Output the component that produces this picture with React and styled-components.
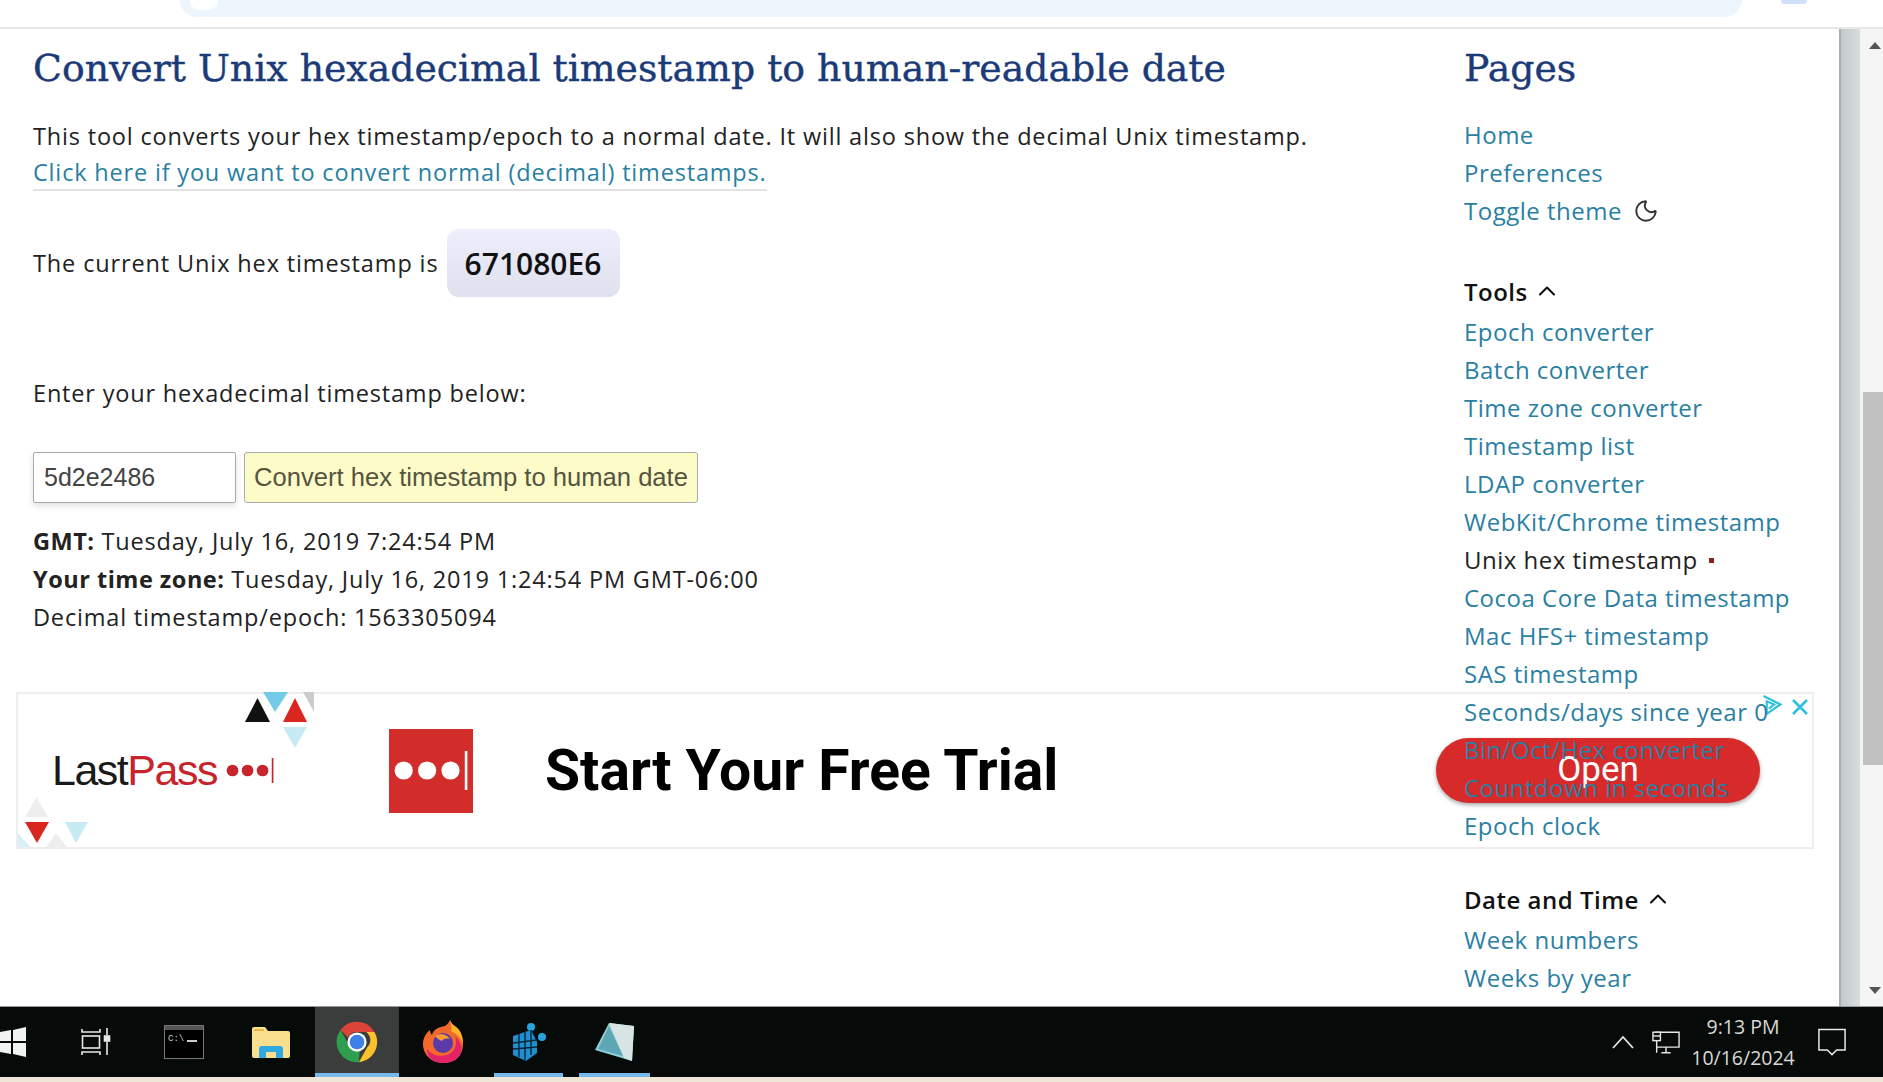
import React from 'react';
import styled, { createGlobalStyle } from 'styled-components';
import { Moon, ChevronUp } from 'lucide-react';

const GlobalStyle = createGlobalStyle`
  html, body {
    margin: 0;
    padding: 0;
    height: 100%;
    overflow: hidden;
    background: #fff;
  }
  * { box-sizing: border-box; }
`;

const Page = styled.div`
  width: 1883px;
  height: 1082px;
  display: flex;
  flex-direction: column;
  font-family: "Open Sans", "Noto Sans", sans-serif;
  color: #222;
  overflow: hidden;
`;

const BrowserBar = styled.div`
  height: 29px;
  flex: none;
  display: flex;
  justify-content: space-between;
  padding-left: 180px;
  padding-right: 76px;
  border-bottom: 2px solid #e8e8e8;
`;

const UrlPill = styled.div`
  width: 1562px;
  height: 17px;
  background: #eef6fd;
  border-radius: 0 0 22px 22px;
  padding-left: 10px;
`;

const UrlCircle = styled.div`
  width: 28px;
  height: 10px;
  background: #fff;
  border-radius: 0 0 14px 14px;
`;

const ProfileDot = styled.div`
  width: 26px;
  height: 4px;
  background: #cfe0fb;
  border-radius: 0 0 13px 13px;
`;

const Main = styled.div`
  position: relative;
  flex: 1;
  min-height: 0;
  display: flex;
  overflow: hidden;
`;

const Content = styled.main`
  width: 1432px;
  flex: none;
  padding: 17px 0 0 33px;
`;

const Title = styled.h1`
  margin: 0;
  font-family: "DejaVu Serif", "Liberation Serif", serif;
  font-weight: 400;
  font-size: 37.8px;
  line-height: 44px;
  color: #1b3b78;
  -webkit-text-stroke: 0.4px #1b3b78;
  white-space: nowrap;
`;

const Paragraph = styled.p`
  margin: ${p => p.$top || 0}px 0 0;
  font-size: 23.5px;
  letter-spacing: 0.82px;
  line-height: 36px;
  white-space: nowrap;
`;

const InfoLink = styled.a`
  color: #2a7fa3;
  display: inline-block;
  line-height: 33px;
  border-bottom: 2px solid #e3e3e3;
`;

const CurrentRow = styled.div`
  margin-top: 38px;
  display: flex;
  align-items: center;
  gap: 8px;
  font-size: 23.5px;
  letter-spacing: 0.87px;
  white-space: nowrap;
`;

const HexBadge = styled.span`
  width: 173px;
  height: 68px;
  display: flex;
  align-items: center;
  justify-content: center;
  border-radius: 12px;
  background: linear-gradient(#eeeefc, #dfe1ef);
  font-weight: 600;
  font-size: 30px;
  letter-spacing: 0;
  color: #111;
`;

const ConvertForm = styled.form`
  margin: 41px 0 0;
  display: flex;
  gap: 8px;
  height: 51px;
`;

const HexInput = styled.input`
  width: 203px;
  border: 1px solid #aaa;
  border-radius: 2px;
  padding: 0 10px;
  font-family: "Liberation Sans", Arial, sans-serif;
  font-size: 25px;
  color: #444;
  box-shadow: 0 3px 6px rgba(0, 0, 0, 0.12);
  outline: none;
`;

const ConvertButton = styled.button`
  width: 454px;
  border: 1px solid #aaa;
  border-radius: 3px;
  padding: 0;
  background: #fdfbc8;
  font-family: "Liberation Sans", Arial, sans-serif;
  font-size: 25.6px;
  color: #55553f;
`;

const Results = styled.div`
  margin-top: 19px;
  font-size: 23.5px;
  letter-spacing: 0.82px;
  line-height: 38px;
  white-space: nowrap;
`;

const ResultLabel = styled.b`
  letter-spacing: 0.5px;
`;

const Sidebar = styled.aside`
  position: relative;
  z-index: 2;
  width: 407px;
  flex: none;
  padding: 17px 0 0 32px;
  font-size: 24px;
  letter-spacing: 0.5px;
  white-space: nowrap;
`;

const SideTitle = styled.h2`
  margin: 0 0 26px;
  font-family: "DejaVu Serif", "Liberation Serif", serif;
  font-weight: 400;
  font-size: 37.8px;
  letter-spacing: 0;
  line-height: 44px;
  color: #1b3b78;
  -webkit-text-stroke: 0.4px #1b3b78;
`;

const SideList = styled.ul`
  list-style: none;
  margin: 0 0 ${p => p.$after || 0}px;
  padding: 0;
`;

const SideItem = styled.li`
  height: 38px;
  line-height: 38px;
  display: flex;
  align-items: center;
  color: ${p => (p.$current ? '#222' : '#2a7fa3')};
`;

const SectionHead = styled.h3`
  margin: 0 0 3px;
  height: 38px;
  display: flex;
  align-items: center;
  gap: 5px;
  font-size: 24px;
  font-weight: 600;
  color: #111;
`;

const ThemeIcon = styled(Moon)`
  margin-left: 11px;
  color: #333;
`;

const CurrentMark = styled.span`
  width: 5px;
  height: 5px;
  margin-left: 11px;
  background: #8d1f1f;
`;

const ScrollTrack = styled.div`
  flex: 1;
  display: flex;
  background: #f5f5f5;
`;

const ScrollShadow = styled.div`
  width: 21px;
  flex: none;
  border-left: 2px solid #a9aeae;
  background: linear-gradient(90deg, #c3c9c9, #d8dde0);
`;

const ScrollInner = styled.div`
  flex: 1;
  display: flex;
  flex-direction: column;
  align-items: flex-end;
  justify-content: space-between;
  padding: 13px 2px 12px 0;
  position: relative;
`;

const ScrollArrow = styled.div`
  width: 0;
  height: 0;
  border-left: 6.5px solid transparent;
  border-right: 6.5px solid transparent;
  ${p => (p.$down ? 'border-top: 7px solid #555;' : 'border-bottom: 7px solid #555;')}
`;

const ScrollThumb = styled.div`
  position: absolute;
  top: 363px;
  right: 0;
  width: 20px;
  height: 373px;
  background: #c1c1c1;
`;

const AdBanner = styled.div`
  position: absolute;
  z-index: 1;
  left: 16px;
  top: 663px;
  width: 1798px;
  height: 157px;
  display: flex;
  align-items: center;
  background: #fff;
  border: 2px solid #eee;
  padding-left: 34px;
`;

const AdLogo = styled.div`
  width: 223px;
  flex: none;
  display: flex;
  align-items: center;
  font-family: "Liberation Sans", Arial, sans-serif;
  font-size: 43px;
  letter-spacing: -1.5px;
  color: #1a1a1a;
`;

const AdLogoRed = styled.span`
  color: #c8242b;
  margin-right: 8px;
`;

const AdSquare = styled.div`
  width: 84px;
  height: 84px;
  flex: none;
  margin-left: 114px;
  display: flex;
  align-items: center;
  justify-content: center;
  background: #d32d2b;
`;

const AdHeadline = styled.div`
  margin-left: 72px;
  font-family: "Roboto", "Liberation Sans", sans-serif;
  font-weight: 700;
  font-size: 57px;
  color: #000;
  white-space: nowrap;
`;

const AdButton = styled.div`
  position: absolute;
  left: 1418px;
  top: 44px;
  width: 324px;
  height: 65px;
  display: flex;
  align-items: center;
  justify-content: center;
  border-radius: 33px;
  background: #d72b2b;
  box-shadow: 0 2px 4px rgba(0, 0, 0, 0.35);
  font-family: "Roboto", sans-serif;
  font-size: 35px;
  padding-bottom: 2px;
  color: #fff;
`;

const AdCorner = styled.svg`
  position: absolute;
  left: ${p => p.$left}px;
  top: ${p => p.$top}px;
`;

const Taskbar = styled.footer`
  height: 71px;
  flex: none;
  display: flex;
  align-items: stretch;
  background: #060a08;
  border-top: 1px solid #999;
  color: #d8d8d8;
`;

const TaskIcons = styled.div`
  flex: 1;
  display: flex;
`;

const TaskSlot = styled.div`
  width: ${p => p.$w}px;
  margin-left: ${p => p.$gap || 0}px;
  flex: none;
  display: flex;
  align-items: center;
  justify-content: ${p => (p.$start ? 'flex-start' : 'center')};
  padding-top: 4px;
  background: ${p => (p.$active ? '#3a3d3b' : 'transparent')};
  border-bottom: 4px solid ${p => (p.$open ? '#76b9ed' : 'transparent')};
`;

const Tray = styled.div`
  display: flex;
  align-items: center;
  gap: 18px;
  padding-right: 37px;
`;

const Clock = styled.div`
  width: 110px;
  margin: 0 2px 0 -10px;
  text-align: center;
  font-size: 19.5px;
  font-weight: 500;
  line-height: 31px;
  white-space: nowrap;
`;

const BeigeStrip = styled.div`
  height: 5px;
  flex: none;
  background: #f0e6d8;
`;

const pagesLinks = ['Home', 'Preferences'];
const toolLinks = [
  'Epoch converter',
  'Batch converter',
  'Time zone converter',
  'Timestamp list',
  'LDAP converter',
  'WebKit/Chrome timestamp',
  'Unix hex timestamp',
  'Cocoa Core Data timestamp',
  'Mac HFS+ timestamp',
  'SAS timestamp',
  'Seconds/days since year 0',
  'Bin/Oct/Hex converter',
  'Countdown in seconds',
  'Epoch clock',
];

function DotsMark({ size = 1, color = '#fff' }) {
  return (
    <svg width={60 * size} height={30 * size} viewBox="0 0 60 30">
      <circle cx="9" cy="15" r="7" fill={color} />
      <circle cx="27" cy="15" r="7" fill={color} />
      <circle cx="45" cy="15" r="7" fill={color} />
      <rect x="56" y="0" width="2" height="30" fill={color} />
    </svg>
  );
}

function ChromeIcon() {
  return (
    <svg width="44" height="44" viewBox="0 0 48 48">
      <path d="M24 2a22 22 0 0 1 19 11H24a11 11 0 0 0-10 6L6 11A22 22 0 0 1 24 2z" fill="#db4437" />
      <path d="M43 13a22 22 0 0 1-17 33l9-16a11 11 0 0 0-1-17z" fill="#fbc02d" />
      <path d="M26 46A22 22 0 0 1 6 11l9 16a11 11 0 0 0 12 7z" fill="#2e9e4f" />
      <circle cx="24" cy="24" r="10.5" fill="#fff" />
      <circle cx="24" cy="24" r="8" fill="#3f7fe8" />
    </svg>
  );
}

function FirefoxIcon() {
  return (
    <svg width="42" height="44" viewBox="0 0 42 44">
      <path d="M21 43C9 43 1 34 1 24 1 18 4 13 8 10c0 2 1 4 2 5 1-5 6-8 13-9 3-2 4-4 5-6 1 3 3 5 6 7 5 4 7 10 7 17 0 13-9 19-20 19z" fill="#f2692b" />
      <path d="M21 43C11 43 5 37 5 29c6 8 18 9 25 3 4-4 5-10 3-16 5 5 8 11 6 17-3 7-10 10-18 10z" fill="#e3226a" />
      <path d="M28 0c1 3 3 5 6 7 5 4 7 10 7 17-2-6-6-10-12-13 1-4 0-8-1-11z" fill="#ffb325" />
      <circle cx="21" cy="23" r="10" fill="#5a3aa8" />
      <path d="M13 16c5-3 12-2 15 3-4-1-7 0-8 2-3-1-5-3-7-5z" fill="#ff9a2e" />
    </svg>
  );
}

function FolderIcon() {
  return (
    <svg width="38" height="32" viewBox="0 0 38 32">
      <path d="M0 3a2 2 0 0 1 2-2h11l3 4h20a2 2 0 0 1 2 2v23a2 2 0 0 1-2 2H2a2 2 0 0 1-2-2z" fill="#f9e08f" />
      <rect x="2" y="3" width="10" height="2" fill="#e8b94a" />
      <path d="M7 32V23a3 3 0 0 1 3-3h18a3 3 0 0 1 3 3v9h-7v-6H14v6z" fill="#2fa9e0" />
    </svg>
  );
}

function CmdIcon() {
  return (
    <svg width="40" height="34" viewBox="0 0 40 34">
      <rect x="0.5" y="0.5" width="39" height="33" fill="#000" stroke="#777" />
      <rect x="1" y="1" width="38" height="4" fill="#555" />
      <text x="4" y="16" fill="#ccc" fontSize="9" fontFamily="Liberation Mono, monospace">C:\</text>
      <rect x="23" y="15" width="10" height="2" fill="#ccc" />
    </svg>
  );
}

function RegistryIcon() {
  return (
    <svg width="36" height="38" viewBox="0 0 36 38">
      <circle cx="20" cy="4" r="4" fill="#29a3e0" />
      <circle cx="31" cy="14" r="4" fill="#29a3e0" />
      <path d="M2 13l18-6 6 12v11l-11 8L2 32z" fill="#1f8fcf" />
      <path d="M8 11v23M14 9v28M20 7v25M2 20l24-3M2 26l24-2" stroke="#08263a" strokeWidth="1.4" />
    </svg>
  );
}

function NotepadIcon() {
  return (
    <svg width="40" height="38" viewBox="0 0 40 38">
      <path d="M14 0l25 3-2 35L0 27z" fill="#8fd0da" />
      <path d="M14 0l25 3-2 35-8-3z" fill="#d6e4e4" />
      <path d="M14 3L3 26l25 7z" fill="#5fa6b5" />
    </svg>
  );
}

function TaskViewIcon() {
  return (
    <svg width="30" height="28" viewBox="0 0 30 28" fill="none" stroke="#e8e8e8" strokeWidth="1.6">
      <rect x="1.5" y="8" width="17" height="12" />
      <path d="M1 1v3h18V1M1 27v-3h18v3M26 0v7M26 14v13" />
      <rect x="23.5" y="8" width="5" height="5" fill="#e8e8e8" />
    </svg>
  );
}

function WindowsIcon() {
  return (
    <svg width="26" height="30" viewBox="0 0 26 30" fill="#f2f2f2">
      <path d="M0 5l11-2v11H0zM13 3l13-3v14H13zM0 16h11v11L0 25zM13 16h13v14l-13-3z" />
    </svg>
  );
}

function NetworkIcon() {
  return (
    <svg width="28" height="23" viewBox="0 0 30 24" fill="none" stroke="#e8e8e8" strokeWidth="1.5">
      <path d="M3 1h26v16H5M5 10v13M10 23h10M15 17v6" />
      <rect x="1" y="1" width="8" height="9" fill="#060a08" />
      <path d="M1 5h8" />
    </svg>
  );
}

function ActionIcon() {
  return (
    <svg width="28" height="28" viewBox="0 0 30 29" fill="none" stroke="#e8e8e8" strokeWidth="1.6">
      <path d="M1 1h28v22H20l-5 5-5-5H1z" />
    </svg>
  );
}

function TrayChevron() {
  return (
    <svg width="22" height="14" viewBox="0 0 22 14" fill="none" stroke="#e8e8e8" strokeWidth="1.8">
      <path d="M1 13L11 2l10 11" />
    </svg>
  );
}

export default function App() {
  return (
    <Page>
      <GlobalStyle />
      <BrowserBar>
        <UrlPill><UrlCircle /></UrlPill>
        <ProfileDot />
      </BrowserBar>

      <Main>
        <Content>
          <Title>Convert Unix hexadecimal timestamp to human-readable date</Title>
          <Paragraph $top={28}>
            This tool converts your hex timestamp/epoch to a normal date. It will also show the decimal Unix timestamp.
            <br />
            <InfoLink>Click here if you want to convert normal (decimal) timestamps.</InfoLink>
          </Paragraph>
          <CurrentRow>
            The current Unix hex timestamp is
            <HexBadge>671080E6</HexBadge>
          </CurrentRow>
          <Paragraph $top={78}>Enter your hexadecimal timestamp below:</Paragraph>
          <ConvertForm>
            <HexInput defaultValue="5d2e2486" />
            <ConvertButton type="button">Convert hex timestamp to human date</ConvertButton>
          </ConvertForm>
          <Results>
            <div><ResultLabel>GMT:</ResultLabel> Tuesday, July 16, 2019 7:24:54 PM</div>
            <div><ResultLabel>Your time zone:</ResultLabel> Tuesday, July 16, 2019 1:24:54 PM GMT-06:00</div>
            <div>Decimal timestamp/epoch: 1563305094</div>
          </Results>
        </Content>

        <Sidebar>
          <SideTitle>Pages</SideTitle>
          <SideList $after={42}>
            {pagesLinks.map(link => (
              <SideItem key={link}>{link}</SideItem>
            ))}
            <SideItem>
              Toggle theme
              <ThemeIcon size={26} strokeWidth={1.8} />
            </SideItem>
          </SideList>
          <SectionHead>
            Tools
            <ChevronUp size={28} strokeWidth={1.8} />
          </SectionHead>
          <SideList $after={35}>
            {toolLinks.map(link => (
              <SideItem key={link} $current={link === 'Unix hex timestamp'}>
                {link}
                {link === 'Unix hex timestamp' && <CurrentMark />}
              </SideItem>
            ))}
          </SideList>
          <SectionHead>
            Date and Time
            <ChevronUp size={28} strokeWidth={1.8} />
          </SectionHead>
          <SideList>
            <SideItem>Week numbers</SideItem>
            <SideItem>Weeks by year</SideItem>
          </SideList>
        </Sidebar>

        <ScrollTrack>
          <ScrollShadow />
          <ScrollInner>
            <ScrollArrow />
            <ScrollThumb />
            <ScrollArrow $down />
          </ScrollInner>
        </ScrollTrack>

        <AdBanner>
          <AdCorner $left={227} $top={-2} width={70} height={60} viewBox="0 0 70 60">
            <path d="M12.5 6L25 30H0z" fill="#111" />
            <path d="M18 0h25L30 20z" fill="#74cbe8" />
            <path d="M50 6l12 24H38z" fill="#d9261f" />
            <path d="M58 0h11v20z" fill="#ccc" />
            <path d="M38 35h24L50 56z" fill="#c7ebf5" />
          </AdCorner>
          <AdCorner $left={0} $top={100} width={74} height={55} viewBox="0 0 74 55">
            <path d="M7 23L18.5 3 30 23z" fill="#eeeeee" />
            <path d="M7 28h24L19 49z" fill="#d9261f" />
            <path d="M47 28h23L58 49z" fill="#c7ebf5" />
            <path d="M0 39l12 14H0z" fill="#d7f0f8" />
            <path d="M28 53l10-14 11 14z" fill="#eeeeee" />
          </AdCorner>
          <AdLogo>
            Last<AdLogoRed>Pass</AdLogoRed>
            <DotsMark size={0.9} color="#c8242b" />
          </AdLogo>
          <AdSquare><DotsMark size={1.3} /></AdSquare>
          <AdHeadline>Start Your Free Trial</AdHeadline>
          <AdButton>Open</AdButton>
          <AdCorner $left={1744} $top={1} width={20} height={20} viewBox="1 0 18 19" fill="none" stroke="#2bc0dc" strokeWidth="2">
            <path d="M2 1l16 8-13 9 0-12 7 3-5 4" />
          </AdCorner>
          <AdCorner $left={1774} $top={5} width={16} height={16} viewBox="0 0 16 16" fill="none" stroke="#2bc0dc" strokeWidth="2.6">
            <path d="M1 1l14 14M15 1L1 15" />
          </AdCorner>
        </AdBanner>
      </Main>

      <Taskbar>
        <TaskIcons>
          <TaskSlot $w={26} $start><WindowsIcon /></TaskSlot>
          <TaskSlot $w={30} $gap={55}><TaskViewIcon /></TaskSlot>
          <TaskSlot $w={40} $gap={53}><CmdIcon /></TaskSlot>
          <TaskSlot $w={38} $gap={48}><FolderIcon /></TaskSlot>
          <TaskSlot $w={84} $gap={25} $active $open><ChromeIcon /></TaskSlot>
          <TaskSlot $w={42} $gap={23}><FirefoxIcon /></TaskSlot>
          <TaskSlot $w={69} $gap={30} $open><RegistryIcon /></TaskSlot>
          <TaskSlot $w={71} $gap={16} $open><NotepadIcon /></TaskSlot>
        </TaskIcons>
        <Tray>
          <TrayChevron />
          <NetworkIcon />
          <Clock>
            <div>9:13 PM</div>
            <div>10/16/2024</div>
          </Clock>
          <ActionIcon />
        </Tray>
      </Taskbar>
      <BeigeStrip />
    </Page>
  );
}
